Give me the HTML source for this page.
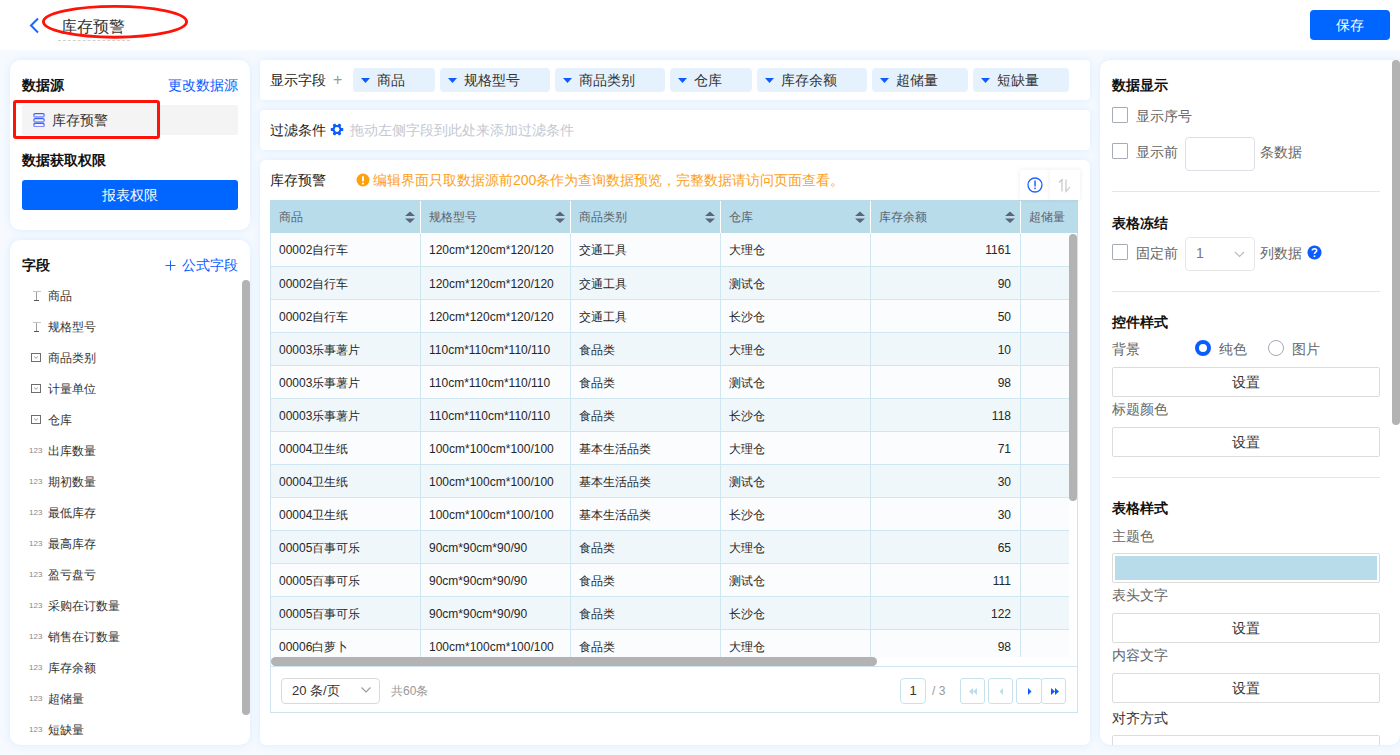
<!DOCTYPE html>
<html><head><meta charset="utf-8">
<style>
*{box-sizing:border-box;margin:0;padding:0}
html,body{width:1400px;height:755px;overflow:hidden}
body{position:relative;background:#f6faff;font-family:"Liberation Sans",sans-serif;color:#222;font-size:14px}
.abs{position:absolute}
.hdr{left:0;top:0;width:1400px;height:50px;background:#fff}
.panel{position:absolute;background:#fff;border-radius:10px;overflow:hidden;box-shadow:0 0 8px rgba(0,130,255,.12)}
.t14{font-size:14px;line-height:16px;white-space:nowrap}
.t12{font-size:12px;line-height:14px;white-space:nowrap}
.b{font-weight:bold;color:#111}
.blue{color:#0a5cff}
.hcell{position:absolute;top:0;width:150px;height:33px}
.hcell span{position:absolute;left:9px;top:10px;font-size:12px;line-height:15px;color:#5a6170;white-space:nowrap}
.hcell .sort{position:absolute;left:135px;top:10.5px}
.hsep{position:absolute;left:0;top:1px;width:1px;height:32px;background:#fff}
.row{position:absolute;left:0;width:900px;height:33px;border-top:1px solid #d0e6f0}
.row:first-child{border-top:none}
.cell{position:absolute;top:0;width:150px;height:33px;border-left:1px solid #d0e6f0;padding-left:8px;font-size:12px;line-height:34px;color:#262626;white-space:nowrap}
.cell.num{text-align:right;padding-right:9px}
.tbox{width:30px;height:30px;background:#fff;box-shadow:0 0 4px rgba(120,100,160,.15)}
.pbtn{width:25px;height:26px;border:1px solid #c8e2ed;border-radius:3px;overflow:hidden}
.pbtn svg{display:block}
.chip{position:absolute;top:8px;height:24px;background:#e5f2fd;border-radius:4px}
.chip .tri{position:absolute;left:8px;top:10px}
.chip span{position:absolute;left:24px;top:4px;font-size:14px;line-height:16px;color:#333;white-space:nowrap}
.g{color:#666}
.cb{width:16px;height:16px;border:1px solid #a7abb8;border-radius:1px;background:#fff}
.hr{left:12px;width:268px;height:1px;background:#e6e6e6}
.sbtn{left:12px;width:268px;height:30px;border:1px solid #dcdcdc;border-radius:2px;font-size:14px;line-height:28px;text-align:center;color:#333}
</style></head><body>
<div class="abs hdr">
  <svg class="abs" style="left:28px;top:17px" width="13" height="17" viewBox="0 0 13 17"><path d="M10 1.5 L3 8.5 L10 15.5" fill="none" stroke="#1a66ff" stroke-width="2"/></svg>
  <div class="abs" style="left:61px;top:17px;font-size:16px;line-height:20px;color:#333">库存预警</div>
  <div class="abs" style="left:58px;top:40px;width:72px;border-top:1px dashed #d0d0d0"></div>
  <svg class="abs" style="left:40px;top:3px" width="150" height="38" viewBox="0 0 150 38"><ellipse cx="75" cy="18.8" rx="71.6" ry="15.4" fill="none" stroke="#ff1208" stroke-width="2.9"/></svg>
  <div class="abs" style="left:1310px;top:10px;width:80px;height:30px;background:#0066ff;border-radius:4px;color:#fff;font-size:14px;line-height:30px;text-align:center">保存</div>
</div>

<!-- left panel 1 -->
<div class="panel" style="left:10px;top:60px;width:240px;height:170px">
  <div class="abs t14 b" style="left:12px;top:17px">数据源</div>
  <div class="abs t14 blue" style="left:158px;top:17px">更改数据源</div>
  <div class="abs" style="left:12px;top:45px;width:216px;height:30px;background:#f4f4f5;border-radius:2px"></div>
  <svg class="abs" style="left:23px;top:52px" width="12" height="15" viewBox="0 0 12 15"><defs><linearGradient id="ig" x1="0" y1="0" x2="0" y2="1"><stop offset="0" stop-color="#2b66ff"/><stop offset="1" stop-color="#8c88ff"/></linearGradient></defs><g fill="none" stroke="url(#ig)" stroke-width="1.3"><rect x="0.9" y="1.6" width="10.2" height="3.4" rx="1.2"/><rect x="0.9" y="6.6" width="10.2" height="3.4" rx="1.2"/><rect x="0.9" y="11.4" width="10.2" height="3.2" rx="1.2"/></g></svg>
  <div class="abs t14" style="left:42px;top:52px;color:#333">库存预警</div>
  <div class="abs" style="left:3px;top:40px;width:147px;height:39px;border:3px solid #ff1208;border-radius:3px"></div>
  <div class="abs t14 b" style="left:12px;top:92px">数据获取权限</div>
  <div class="abs" style="left:12px;top:120px;width:216px;height:30px;background:#0066ff;border-radius:3px;color:#fff;font-size:14px;line-height:30px;text-align:center">报表权限</div>
</div>

<!-- left panel 2 -->
<div class="panel" style="left:10px;top:240px;width:240px;height:505px" id="fields">
  <div class="abs t14 b" style="left:12px;top:17px">字段</div>
  <svg class="abs" style="left:155px;top:20px" width="11" height="11" viewBox="0 0 11 11"><path d="M5.5 0.5 L5.5 10.5 M0.5 5.5 L10.5 5.5" stroke="#1a66ff" stroke-width="1.1"/></svg><div class="abs t14 blue" style="left:172px;top:17px">公式字段</div>
  <svg class="abs" style="left:23px;top:49px" width="9" height="13" viewBox="0 0 9 13"><rect x="0" y="2" width="8" height="1" fill="#c4c4c4"/><rect x="3" y="3" width="1" height="8" fill="#a0a0a0"/><rect x="1" y="11" width="5" height="1" fill="#555"/></svg><div class="abs t12" style="left:38px;top:48.5px;color:#333">商品</div>
  <svg class="abs" style="left:23px;top:80px" width="9" height="13" viewBox="0 0 9 13"><rect x="0" y="2" width="8" height="1" fill="#c4c4c4"/><rect x="3" y="3" width="1" height="8" fill="#a0a0a0"/><rect x="1" y="11" width="5" height="1" fill="#555"/></svg><div class="abs t12" style="left:38px;top:79.5px;color:#333">规格型号</div>
  <svg class="abs" style="left:20px;top:112px" width="12" height="11" viewBox="0 0 12 11"><path d="M1 1 H11 V10 H1 Z M2 2 V9 H10 V2 Z" fill="#6e6e6e" fill-rule="evenodd"/><path d="M4.2 4.6 L6 6.3 L7.8 4.6" fill="none" stroke="#8a8a8a" stroke-width="0.9"/></svg><div class="abs t12" style="left:38px;top:110.5px;color:#333">商品类别</div>
  <svg class="abs" style="left:20px;top:143px" width="12" height="11" viewBox="0 0 12 11"><path d="M1 1 H11 V10 H1 Z M2 2 V9 H10 V2 Z" fill="#6e6e6e" fill-rule="evenodd"/><path d="M4.2 4.6 L6 6.3 L7.8 4.6" fill="none" stroke="#8a8a8a" stroke-width="0.9"/></svg><div class="abs t12" style="left:38px;top:141.5px;color:#333">计量单位</div>
  <svg class="abs" style="left:20px;top:174px" width="12" height="11" viewBox="0 0 12 11"><path d="M1 1 H11 V10 H1 Z M2 2 V9 H10 V2 Z" fill="#6e6e6e" fill-rule="evenodd"/><path d="M4.2 4.6 L6 6.3 L7.8 4.6" fill="none" stroke="#8a8a8a" stroke-width="0.9"/></svg><div class="abs t12" style="left:38px;top:172.5px;color:#333">仓库</div>
  <div class="abs" style="left:19px;top:205.5px;font-size:8px;line-height:10px;color:#888;letter-spacing:0">123</div><div class="abs t12" style="left:38px;top:203.5px;color:#333">出库数量</div>
  <div class="abs" style="left:19px;top:236.5px;font-size:8px;line-height:10px;color:#888;letter-spacing:0">123</div><div class="abs t12" style="left:38px;top:234.5px;color:#333">期初数量</div>
  <div class="abs" style="left:19px;top:267.5px;font-size:8px;line-height:10px;color:#888;letter-spacing:0">123</div><div class="abs t12" style="left:38px;top:265.5px;color:#333">最低库存</div>
  <div class="abs" style="left:19px;top:298.5px;font-size:8px;line-height:10px;color:#888;letter-spacing:0">123</div><div class="abs t12" style="left:38px;top:296.5px;color:#333">最高库存</div>
  <div class="abs" style="left:19px;top:329.5px;font-size:8px;line-height:10px;color:#888;letter-spacing:0">123</div><div class="abs t12" style="left:38px;top:327.5px;color:#333">盈亏盘亏</div>
  <div class="abs" style="left:19px;top:360.5px;font-size:8px;line-height:10px;color:#888;letter-spacing:0">123</div><div class="abs t12" style="left:38px;top:358.5px;color:#333">采购在订数量</div>
  <div class="abs" style="left:19px;top:391.5px;font-size:8px;line-height:10px;color:#888;letter-spacing:0">123</div><div class="abs t12" style="left:38px;top:389.5px;color:#333">销售在订数量</div>
  <div class="abs" style="left:19px;top:422.5px;font-size:8px;line-height:10px;color:#888;letter-spacing:0">123</div><div class="abs t12" style="left:38px;top:420.5px;color:#333">库存余额</div>
  <div class="abs" style="left:19px;top:453.5px;font-size:8px;line-height:10px;color:#888;letter-spacing:0">123</div><div class="abs t12" style="left:38px;top:451.5px;color:#333">超储量</div>
  <div class="abs" style="left:19px;top:484.5px;font-size:8px;line-height:10px;color:#888;letter-spacing:0">123</div><div class="abs t12" style="left:38px;top:482.5px;color:#333">短缺量</div>
  <div class="abs" style="left:232px;top:40px;width:8px;height:435px;background:#b3b3b3;border-radius:4px"></div>
</div>

<!-- middle -->
<div class="panel" style="left:260px;top:60px;width:830px;height:40px;border-radius:4px" id="showf">
  <div class="abs t14" style="left:10px;top:12px">显示字段</div>
  <div class="abs" style="left:73px;top:10px;font-size:16px;line-height:20px;color:#999">+</div>
  <div class="chip" style="left:93px;width:82px"><svg class="tri" width="9" height="5" viewBox="0 0 9 5"><path d="M0 0 L9 0 L4.5 5 Z" fill="#0a5cff"/></svg><span>商品</span></div>
  <div class="chip" style="left:180px;width:110px"><svg class="tri" width="9" height="5" viewBox="0 0 9 5"><path d="M0 0 L9 0 L4.5 5 Z" fill="#0a5cff"/></svg><span>规格型号</span></div>
  <div class="chip" style="left:295px;width:110px"><svg class="tri" width="9" height="5" viewBox="0 0 9 5"><path d="M0 0 L9 0 L4.5 5 Z" fill="#0a5cff"/></svg><span>商品类别</span></div>
  <div class="chip" style="left:410px;width:82px"><svg class="tri" width="9" height="5" viewBox="0 0 9 5"><path d="M0 0 L9 0 L4.5 5 Z" fill="#0a5cff"/></svg><span>仓库</span></div>
  <div class="chip" style="left:497px;width:110px"><svg class="tri" width="9" height="5" viewBox="0 0 9 5"><path d="M0 0 L9 0 L4.5 5 Z" fill="#0a5cff"/></svg><span>库存余额</span></div>
  <div class="chip" style="left:612px;width:96px"><svg class="tri" width="9" height="5" viewBox="0 0 9 5"><path d="M0 0 L9 0 L4.5 5 Z" fill="#0a5cff"/></svg><span>超储量</span></div>
  <div class="chip" style="left:713px;width:96px"><svg class="tri" width="9" height="5" viewBox="0 0 9 5"><path d="M0 0 L9 0 L4.5 5 Z" fill="#0a5cff"/></svg><span>短缺量</span></div>
</div>
<div class="panel" style="left:260px;top:110px;width:830px;height:40px;border-radius:4px">
  <div class="abs t14" style="left:10px;top:12px">过滤条件</div>
  <svg class="abs" style="left:70px;top:13px" width="14" height="13" viewBox="0 0 14 13"><g fill="#0a5cff"><circle cx="7" cy="6.5" r="4.5"/><rect x="0.7" y="5" width="12.6" height="3" rx="0.7"/><rect x="0.7" y="5" width="12.6" height="3" rx="0.7" transform="rotate(60 7 6.5)"/><rect x="0.7" y="5" width="12.6" height="3" rx="0.7" transform="rotate(120 7 6.5)"/></g><circle cx="7" cy="6.5" r="2.4" fill="#fff"/></svg>
  <div class="abs t14" style="left:90px;top:12px;color:#c3c8d2">拖动左侧字段到此处来添加过滤条件</div>
</div>
<div class="panel" style="left:260px;top:160px;width:830px;height:585px;border-radius:6px" id="tbl">
  <div class="abs t14" style="left:10px;top:12px">库存预警</div>
  <svg class="abs" style="left:96px;top:13px" width="14" height="14" viewBox="0 0 14 14"><circle cx="7" cy="7" r="6.5" fill="#ffa00c"/><rect x="6" y="3" width="2" height="5.5" rx="1" fill="#fff"/><circle cx="7" cy="10.5" r="1.1" fill="#fff"/></svg>
  <div class="abs t14" style="left:113px;top:12px;color:#fca01a">编辑界面只取数据源前200条作为查询数据预览，完整数据请访问页面查看。</div>
  <div class="abs" style="left:10px;top:40px;width:808px;height:33px;background:#b9dcea;overflow:hidden">
    <div class="hcell" style="left:0px"><span>商品</span><svg class="sort" width="10" height="12" viewBox="0 0 10 12"><path d="M5 0.5 L10 5 L0 5 Z M0 7.5 L10 7.5 L5 12 Z" fill="#5b6478"/></svg></div><div class="hcell" style="left:150px"><div class="hsep"></div><span>规格型号</span><svg class="sort" width="10" height="12" viewBox="0 0 10 12"><path d="M5 0.5 L10 5 L0 5 Z M0 7.5 L10 7.5 L5 12 Z" fill="#5b6478"/></svg></div><div class="hcell" style="left:300px"><div class="hsep"></div><span>商品类别</span><svg class="sort" width="10" height="12" viewBox="0 0 10 12"><path d="M5 0.5 L10 5 L0 5 Z M0 7.5 L10 7.5 L5 12 Z" fill="#5b6478"/></svg></div><div class="hcell" style="left:450px"><div class="hsep"></div><span>仓库</span><svg class="sort" width="10" height="12" viewBox="0 0 10 12"><path d="M5 0.5 L10 5 L0 5 Z M0 7.5 L10 7.5 L5 12 Z" fill="#5b6478"/></svg></div><div class="hcell" style="left:600px"><div class="hsep"></div><span>库存余额</span><svg class="sort" width="10" height="12" viewBox="0 0 10 12"><path d="M5 0.5 L10 5 L0 5 Z M0 7.5 L10 7.5 L5 12 Z" fill="#5b6478"/></svg></div><div class="hcell" style="left:750px"><div class="hsep"></div><span>超储量</span></div>
  </div>
  <div class="abs tbox" style="left:760px;top:10px"><svg width="30" height="30" viewBox="0 0 30 30"><circle cx="15" cy="15" r="7" fill="none" stroke="#1f63ff" stroke-width="1.3"/><rect x="14.3" y="10.5" width="1.5" height="6" fill="#1f63ff"/><rect x="14.3" y="17.6" width="1.5" height="1.6" fill="#1f63ff"/></svg></div>
  <div class="abs tbox" style="left:790px;top:10px"><svg width="30" height="30" viewBox="0 0 30 30"><path d="M9 12.5 L12 9.5 L12 21.5 M16 9.5 L16 21.5 L20 17" fill="none" stroke="#c2c2c2" stroke-width="1.1"/></svg></div>
  <div class="abs" style="left:10px;top:73px;width:799px;height:424px;overflow:hidden">
<div class="row" style="top:0px;background:#fafcfe">
<div class="cell" style="left:0px">00002自行车</div>
<div class="cell" style="left:150px">120cm*120cm*120/120</div>
<div class="cell" style="left:300px">交通工具</div>
<div class="cell" style="left:450px">大理仓</div>
<div class="cell num" style="left:600px">1161</div>
<div class="cell" style="left:750px"></div>
</div>
<div class="row" style="top:33px;background:#f0f7fb">
<div class="cell" style="left:0px">00002自行车</div>
<div class="cell" style="left:150px">120cm*120cm*120/120</div>
<div class="cell" style="left:300px">交通工具</div>
<div class="cell" style="left:450px">测试仓</div>
<div class="cell num" style="left:600px">90</div>
<div class="cell" style="left:750px"></div>
</div>
<div class="row" style="top:66px;background:#fafcfe">
<div class="cell" style="left:0px">00002自行车</div>
<div class="cell" style="left:150px">120cm*120cm*120/120</div>
<div class="cell" style="left:300px">交通工具</div>
<div class="cell" style="left:450px">长沙仓</div>
<div class="cell num" style="left:600px">50</div>
<div class="cell" style="left:750px"></div>
</div>
<div class="row" style="top:99px;background:#f0f7fb">
<div class="cell" style="left:0px">00003乐事薯片</div>
<div class="cell" style="left:150px">110cm*110cm*110/110</div>
<div class="cell" style="left:300px">食品类</div>
<div class="cell" style="left:450px">大理仓</div>
<div class="cell num" style="left:600px">10</div>
<div class="cell" style="left:750px"></div>
</div>
<div class="row" style="top:132px;background:#fafcfe">
<div class="cell" style="left:0px">00003乐事薯片</div>
<div class="cell" style="left:150px">110cm*110cm*110/110</div>
<div class="cell" style="left:300px">食品类</div>
<div class="cell" style="left:450px">测试仓</div>
<div class="cell num" style="left:600px">98</div>
<div class="cell" style="left:750px"></div>
</div>
<div class="row" style="top:165px;background:#f0f7fb">
<div class="cell" style="left:0px">00003乐事薯片</div>
<div class="cell" style="left:150px">110cm*110cm*110/110</div>
<div class="cell" style="left:300px">食品类</div>
<div class="cell" style="left:450px">长沙仓</div>
<div class="cell num" style="left:600px">118</div>
<div class="cell" style="left:750px"></div>
</div>
<div class="row" style="top:198px;background:#fafcfe">
<div class="cell" style="left:0px">00004卫生纸</div>
<div class="cell" style="left:150px">100cm*100cm*100/100</div>
<div class="cell" style="left:300px">基本生活品类</div>
<div class="cell" style="left:450px">大理仓</div>
<div class="cell num" style="left:600px">71</div>
<div class="cell" style="left:750px"></div>
</div>
<div class="row" style="top:231px;background:#f0f7fb">
<div class="cell" style="left:0px">00004卫生纸</div>
<div class="cell" style="left:150px">100cm*100cm*100/100</div>
<div class="cell" style="left:300px">基本生活品类</div>
<div class="cell" style="left:450px">测试仓</div>
<div class="cell num" style="left:600px">30</div>
<div class="cell" style="left:750px"></div>
</div>
<div class="row" style="top:264px;background:#fafcfe">
<div class="cell" style="left:0px">00004卫生纸</div>
<div class="cell" style="left:150px">100cm*100cm*100/100</div>
<div class="cell" style="left:300px">基本生活品类</div>
<div class="cell" style="left:450px">长沙仓</div>
<div class="cell num" style="left:600px">30</div>
<div class="cell" style="left:750px"></div>
</div>
<div class="row" style="top:297px;background:#f0f7fb">
<div class="cell" style="left:0px">00005百事可乐</div>
<div class="cell" style="left:150px">90cm*90cm*90/90</div>
<div class="cell" style="left:300px">食品类</div>
<div class="cell" style="left:450px">大理仓</div>
<div class="cell num" style="left:600px">65</div>
<div class="cell" style="left:750px"></div>
</div>
<div class="row" style="top:330px;background:#fafcfe">
<div class="cell" style="left:0px">00005百事可乐</div>
<div class="cell" style="left:150px">90cm*90cm*90/90</div>
<div class="cell" style="left:300px">食品类</div>
<div class="cell" style="left:450px">测试仓</div>
<div class="cell num" style="left:600px">111</div>
<div class="cell" style="left:750px"></div>
</div>
<div class="row" style="top:363px;background:#f0f7fb">
<div class="cell" style="left:0px">00005百事可乐</div>
<div class="cell" style="left:150px">90cm*90cm*90/90</div>
<div class="cell" style="left:300px">食品类</div>
<div class="cell" style="left:450px">长沙仓</div>
<div class="cell num" style="left:600px">122</div>
<div class="cell" style="left:750px"></div>
</div>
<div class="row" style="top:396px;background:#fafcfe">
<div class="cell" style="left:0px">00006白萝卜</div>
<div class="cell" style="left:150px">100cm*100cm*100/100</div>
<div class="cell" style="left:300px">食品类</div>
<div class="cell" style="left:450px">大理仓</div>
<div class="cell num" style="left:600px">98</div>
<div class="cell" style="left:750px"></div>
</div>
</div>
  <div class="abs" style="left:809px;top:74px;width:8px;height:267px;background:#b3b3b3;border-radius:4px"></div>
  <div class="abs" style="left:10px;top:73px;width:808px;height:480px;border-left:1px solid #cfe4ee;border-right:1px solid #cfe4ee;border-bottom:1px solid #cfe4ee;pointer-events:none"></div>
  <div class="abs" style="left:11px;top:497px;width:606px;height:9px;background:#b3b3b3;border-radius:4.5px"></div>
  <div class="abs" style="left:10px;top:506px;width:808px;border-top:1px solid #cfe4ee"></div>
  <div class="abs" style="left:21px;top:518px;width:99px;height:26px;border:1px solid #d9d9d9;border-radius:4px"></div>
  <div class="abs t12" style="left:32px;top:524px;color:#333;font-size:13px">20 条/页</div>
  <svg class="abs" style="left:100px;top:526px" width="12" height="8" viewBox="0 0 12 8"><path d="M1.5 1.5 L6 6 L10.5 1.5" fill="none" stroke="#999" stroke-width="1.1"/></svg>
  <div class="abs t12" style="left:131px;top:524px;color:#999">共60条</div>
  <div class="abs" style="left:640px;top:518px;width:26px;height:26px;border:1px solid #c8e2ed;border-radius:4px;font-size:13px;line-height:24px;text-align:center;color:#333">1</div>
  <div class="abs t12" style="left:672px;top:524px;color:#999">/ 3</div>
  <div class="abs pbtn" style="left:700px;top:518px"><svg width="25" height="25" viewBox="0 0 25 25"><path d="M8 12.5 L12 9 L12 16 Z M12 12.5 L16 9 L16 16 Z" fill="#bddcea"/></svg></div>
  <div class="abs pbtn" style="left:728px;top:518px"><svg width="25" height="25" viewBox="0 0 25 25"><path d="M10.5 12.5 L14 9 L14 16 Z" fill="#bddcea"/></svg></div>
  <div class="abs pbtn" style="left:756px;top:518px;width:26px"><svg width="25" height="25" viewBox="0 0 25 25"><path d="M11 9 L14.5 12.5 L11 16 Z" fill="#0a5cff"/></svg></div>
  <div class="abs pbtn" style="left:781px;top:518px"><svg width="25" height="25" viewBox="0 0 25 25"><path d="M9 9 L13 12.5 L9 16 Z M13 9 L17 12.5 L13 16 Z" fill="#0a5cff"/></svg></div>
</div>

<!-- right -->
<div class="panel" style="left:1100px;top:60px;width:300px;height:685px;border-radius:10px 0 10px 10px" id="right">
  <div class="abs t14 b" style="left:12px;top:17px">数据显示</div>
  <div class="abs cb" style="left:12px;top:47px"></div>
  <div class="abs t14 g" style="left:36px;top:48px">显示序号</div>
  <div class="abs cb" style="left:12px;top:83px"></div>
  <div class="abs t14 g" style="left:36px;top:84px">显示前</div>
  <div class="abs" style="left:85px;top:77px;width:70px;height:34px;border:1px solid #dcdfe6;border-radius:4px"></div>
  <div class="abs t14 g" style="left:160px;top:84px">条数据</div>
  <div class="abs hr" style="top:131px"></div>

  <div class="abs t14 b" style="left:12px;top:155px">表格冻结</div>
  <div class="abs cb" style="left:12px;top:184px"></div>
  <div class="abs t14 g" style="left:36px;top:185px">固定前</div>
  <div class="abs" style="left:85px;top:177px;width:70px;height:34px;border:1px solid #e6e6e6;border-radius:4px"></div>
  <div class="abs t14" style="left:96px;top:185px;color:#777">1</div>
  <svg class="abs" style="left:134px;top:191px" width="11" height="7" viewBox="0 0 11 7"><path d="M1 1 L5.5 5.5 L10 1" fill="none" stroke="#bbb" stroke-width="1.1"/></svg>
  <div class="abs t14 g" style="left:160px;top:185px">列数据</div>
  <svg class="abs" style="left:207px;top:185px" width="15" height="15" viewBox="0 0 15 15"><circle cx="7.5" cy="7.5" r="7" fill="#0a5cff"/><path d="M5.3 5.6 C5.3 3.2 9.7 3.2 9.7 5.6 C9.7 7.2 7.5 7.3 7.5 9" fill="none" stroke="#fff" stroke-width="1.6"/><circle cx="7.5" cy="11.2" r="0.95" fill="#fff"/></svg>
  <div class="abs hr" style="top:231px"></div>

  <div class="abs t14 b" style="left:12px;top:254px">控件样式</div>
  <div class="abs t14 g" style="left:12px;top:281px">背景</div>
  <div class="abs" style="left:95px;top:280px;width:16px;height:16px;border-radius:50%;border:4.5px solid #0a5cff;background:#fff"></div>
  <div class="abs t14 g" style="left:119px;top:281px">纯色</div>
  <div class="abs" style="left:168px;top:280px;width:16px;height:16px;border-radius:50%;border:1px solid #a3a8b5;background:#fff"></div>
  <div class="abs t14 g" style="left:192px;top:281px">图片</div>
  <div class="abs sbtn" style="top:307px">设置</div>
  <div class="abs t14 g" style="left:12px;top:341px">标题颜色</div>
  <div class="abs sbtn" style="top:367px">设置</div>
  <div class="abs hr" style="top:417px"></div>

  <div class="abs t14 b" style="left:12px;top:440px">表格样式</div>
  <div class="abs t14 g" style="left:12px;top:468px">主题色</div>
  <div class="abs" style="left:12px;top:493px;width:268px;height:30px;border:1px solid #dcdcdc;border-radius:2px;padding:2px"><div style="width:100%;height:100%;background:#b8dcea"></div></div>
  <div class="abs t14 g" style="left:12px;top:527px">表头文字</div>
  <div class="abs sbtn" style="top:553px">设置</div>
  <div class="abs t14 g" style="left:12px;top:587px">内容文字</div>
  <div class="abs sbtn" style="top:613px">设置</div>
  <div class="abs t14" style="left:12px;top:650px;color:#333">对齐方式</div>
  <div class="abs" style="left:12px;top:675px;width:268px;height:30px;border:1px solid #dcdcdc;border-radius:2px"></div>
  <div class="abs" style="left:292px;top:0px;width:8px;height:365px;background:#b3b3b3;border-radius:4px"></div>
</div>
</body></html>
